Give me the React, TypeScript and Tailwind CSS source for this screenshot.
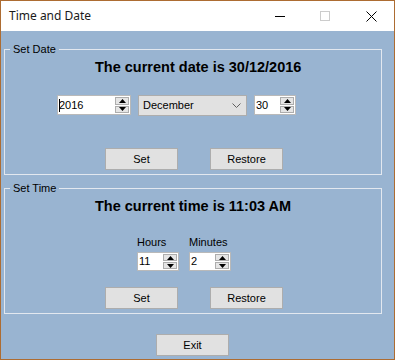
const ui = "font-['Liberation_Sans',Arial,sans-serif] text-[11px] leading-[13px] text-black"

function Arrow({ up }: { up?: boolean }) {
  return (
    <svg width="7" height="4" viewBox="0 0 7 4">
      <path d={up ? "M3.5 0L7 4H0z" : "M0 0H7L3.5 4z"} fill="#000" />
    </svg>
  )
}

function Spin() {
  return (
    <div className="flex w-[15px] flex-col gap-px py-px pr-px">
      <div className="flex flex-1 items-center justify-center border border-[#adadad] bg-[#e5e5e5]">
        <Arrow up />
      </div>
      <div className="flex flex-1 items-center justify-center border border-[#adadad] bg-[#e5e5e5]">
        <Arrow />
      </div>
    </div>
  )
}

function NumBox({
  value,
  className,
  caret,
}: {
  value: string
  className: string
  caret?: boolean
}) {
  return (
    <div className={`flex border border-[#b9b9b9] bg-white ${className}`}>
      <div className="flex flex-1 items-center pl-px">
        {caret && <span className="mr-[-1px] h-[13px] w-px bg-black" />}
        <span>{value}</span>
      </div>
      <Spin />
    </div>
  )
}

function WinButton({ children }: { children: string }) {
  return (
    <div className="flex h-[22px] w-[73px] items-center justify-center border border-[#adadad] bg-[#e1e1e1]">
      {children}
    </div>
  )
}

function GroupBox({
  title,
  className,
  children,
}: {
  title: string
  className?: string
  children: React.ReactNode
}) {
  return (
    <fieldset
      className={`ml-[3px] h-[132px] w-[378px] border border-[#e3e8ef] ${className ?? ""}`}
    >
      <legend className="ml-[5px] px-[3px]">{title}</legend>
      {children}
    </fieldset>
  )
}

export default function App() {
  return (
    <div className={`h-[360px] w-[395px] border border-[#ad6c32] ${ui}`}>
      <div className="flex h-[30px] items-center bg-white">
        <span className="pl-[8px] font-['Noto_Sans',sans-serif] text-[12px] leading-[16px] text-[#1a1a1a]">
          Time and Date
        </span>
        <div className="ml-auto flex h-full">
          <div className="flex w-[46px] items-center justify-center">
            <span className="ml-[2px] h-px w-[10px] bg-black" />
          </div>
          <div className="flex w-[46px] items-center justify-center">
            <span className="h-[10px] w-[10px] border border-[#cccccc]" />
          </div>
          <div className="flex w-[46px] items-center justify-center">
            <svg width="11" height="11" viewBox="0 0 11 11">
              <path d="M0.5 0.5L10.5 10.5M10.5 0.5L0.5 10.5" stroke="#000" strokeWidth="1" />
            </svg>
          </div>
        </div>
      </div>

      <div className="h-[328px] bg-[#99b4d1] pt-[12px]">
        <GroupBox title="Set Date">
          <h2 className="mt-[3px] pl-[90px] text-[14.5px] leading-[17px] font-bold">
            The current date is 30/12/2016
          </h2>
          <div className="mt-[19px] ml-[52px] flex gap-[7px]">
            <NumBox value="2016" caret className="h-[20px] w-[74px]" />
            <div className="flex h-[21px] w-[109px] items-center border border-[#adadad] bg-[#e1e1e1] pl-[4px]">
              <span>December</span>
              <svg className="ml-auto mr-[5px]" width="9" height="5" viewBox="0 0 9 5">
                <path d="M0.5 0.5L4.5 4.5L8.5 0.5" stroke="#606060" fill="none" strokeWidth="1" />
              </svg>
            </div>
            <NumBox value="30" className="h-[20px] w-[42px]" />
          </div>
          <div className="mt-[32px] ml-[100px] flex gap-[32px]">
            <WinButton>Set</WinButton>
            <WinButton>Restore</WinButton>
          </div>
        </GroupBox>

        <GroupBox title="Set Time" className="mt-[7px]">
          <h2 className="mt-[3px] pl-[90px] text-[14.5px] leading-[17px] font-bold">
            The current time is 11:03 AM
          </h2>
          <div className="mt-[21px] ml-[132px] flex gap-[10px]">
            <div className="flex flex-col gap-[3px]">
              <span>Hours</span>
              <NumBox value="11" className="h-[19px] w-[42px]" />
            </div>
            <div className="flex flex-col gap-[3px]">
              <span>Minutes</span>
              <NumBox value="2" className="h-[19px] w-[42px]" />
            </div>
          </div>
          <div className="mt-[16px] ml-[100px] flex gap-[32px]">
            <WinButton>Set</WinButton>
            <WinButton>Restore</WinButton>
          </div>
        </GroupBox>

        <div className="mt-[20px] ml-[155px]">
          <WinButton>Exit</WinButton>
        </div>
      </div>
    </div>
  )
}
